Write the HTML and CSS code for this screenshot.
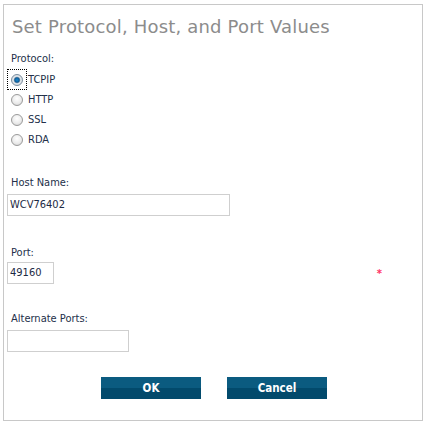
FILE: index.html
```html
<!DOCTYPE html>
<html>
<head>
<meta charset="utf-8">
<link rel="stylesheet" href="styles.css">
</head>
<body>
<div class="panel">
  <h1 class="title">Set Protocol, Host, and Port Values</h1>
  <div class="label label-protocol">Protocol:</div>
  <div class="radios">
    <div class="radio-row"><span class="focus"><span class="radio checked"></span></span><span class="radio-text">TCPIP</span></div>
    <div class="radio-row"><span class="slot"><span class="radio"></span></span><span class="radio-text">HTTP</span></div>
    <div class="radio-row"><span class="slot"><span class="radio"></span></span><span class="radio-text">SSL</span></div>
    <div class="radio-row"><span class="slot"><span class="radio"></span></span><span class="radio-text">RDA</span></div>
  </div>
  <div class="label label-host">Host Name:</div>
  <div class="input input-host">WCV76402</div>
  <div class="label label-port">Port:</div>
  <div class="port-row">
    <div class="input input-port">49160</div>
    <span class="required">*</span>
  </div>
  <div class="label label-alt">Alternate Ports:</div>
  <div class="input input-alt"></div>
  <div class="buttons">
    <div class="btn">OK</div>
    <div class="btn">Cancel</div>
  </div>
</div>
</body>
</html>
```
FILE: styles.css
```css
html, body {
  margin: 0;
  padding: 0;
  background: #ffffff;
}
.panel {
  margin: 4px 5px 0 3px;
  height: 415px;
  border: 1px solid #c8c8c8;
  padding: 0 0 0 3px;
  font-family: "DejaVu Sans Condensed", "Liberation Sans", sans-serif;
  font-size: 11px;
  color: #23304a;
}
.title {
  margin: 10px 0 0 5px;
  font-family: "DejaVu Sans", Verdana, sans-serif;
  font-weight: normal;
  font-size: 18px;
  letter-spacing: 0.18px;
  line-height: 24px;
  color: #8c8c8c;
}
.label {
  line-height: 14px;
  height: 14px;
  padding-left: 4px;
}
.label-protocol { margin-top: 13px; }
.radios { margin-top: 4px; }
.radio-row {
  display: flex;
  align-items: center;
  height: 20px;
}
.slot, .focus {
  width: 20px;
  height: 20px;
  box-sizing: border-box;
  display: flex;
  align-items: center;
  justify-content: center;
}
.focus {
  border: 1px dotted #000;
  height: 21px;
  margin-top: -1px;
}
.radio {
  width: 12px;
  height: 12px;
  box-sizing: border-box;
  border-radius: 50%;
  border: 1px solid #9a9a9a;
  background: radial-gradient(circle at 50% 35%, #ffffff 0%, #ececec 55%, #cfcfcf 100%);
}
.radio.checked {
  border-color: #7a8ea0;
  background: radial-gradient(circle at 50% 50%, #1a8ad0 0%, #0f5e98 32%, #6a8aa8 40%, #e4e8ec 52%, #c8ccd0 100%);
}
.radio-text {
  padding-left: 1px;
  line-height: 14px;
}
.label-host { margin-top: 26px; }
.input {
  box-sizing: border-box;
  height: 22px;
  border: 1px solid #cfcfcf;
  padding: 0 2px;
  line-height: 20px;
  font-size: 11px;
  color: #1d2a44;
}
.input-host { margin-top: 4px; width: 223px; }
.label-port { margin-top: 30px; }
.port-row {
  margin-top: 2px;
  display: flex;
  align-items: flex-start;
  width: 375px;
}
.input-port { width: 47px; }
.required {
  margin-left: auto;
  margin-top: 7px;
  color: #ff3366;
  font-size: 10px;
  line-height: 10px;
  font-family: "DejaVu Sans", sans-serif;
  font-weight: bold;
}
.label-alt { margin-top: 28px; }
.input-alt { margin-top: 4px; width: 122px; }
.buttons {
  margin-top: 25px;
  margin-left: 94px;
  display: flex;
  gap: 26px;
}
.btn {
  width: 100px;
  height: 22px;
  line-height: 22px;
  text-align: center;
  color: #ffffff;
  font-weight: bold;
  font-size: 11.5px;
  background: linear-gradient(to bottom, #0b5b80 0%, #0b5b80 50%, #024a6c 50%, #024a6c 100%);
}
```
